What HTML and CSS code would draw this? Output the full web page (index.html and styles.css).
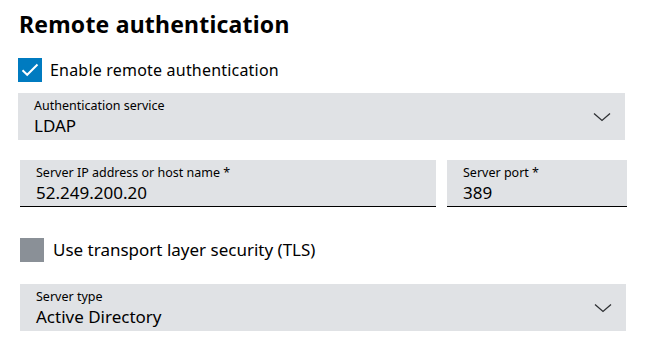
FILE: index.html
```html
<!DOCTYPE html>
<html lang="en">
<head>
    <meta charset="UTF-8">
    <meta name="viewport" content="width=device-width, initial-scale=1.0">
    <title>Remote authentication</title>
    <link rel="stylesheet" href="styles.css">
</head>
<body>
    <div class="page">
        <h1 class="title">Remote authentication</h1>

        <label class="check-row">
            <span class="checkbox checked">
                <svg width="24" height="24" viewBox="0 0 24 24">
                    <path d="M4.5 12.2 L9.2 16.8 L19.5 6.5" fill="none" stroke="#fff" stroke-width="2"/>
                </svg>
            </span>
            <span class="check-label">Enable remote authentication</span>
        </label>

        <div class="field select">
            <div class="field-text">
                <div class="field-label">Authentication service</div>
                <div class="field-value">LDAP</div>
            </div>
            <svg class="chevron" width="18" height="10" viewBox="0 0 18 10">
                <path d="M1 1.5 L9 8.5 L17 1.5" fill="none" stroke="#2e3033" stroke-width="1.3"/>
            </svg>
        </div>

        <div class="field-row shifted">
            <div class="field input host">
                <div class="field-text">
                    <div class="field-label">Server IP address or host name *</div>
                    <div class="field-value">52.249.200.20</div>
                </div>
            </div>
            <div class="field input port">
                <div class="field-text">
                    <div class="field-label">Server port *</div>
                    <div class="field-value">389</div>
                </div>
            </div>
        </div>

        <label class="check-row tls shifted">
            <span class="checkbox disabled"></span>
            <span class="check-label">Use transport layer security (TLS)</span>
        </label>

        <div class="field select server-type shifted">
            <div class="field-text">
                <div class="field-label">Server type</div>
                <div class="field-value">Active Directory</div>
            </div>
            <svg class="chevron" width="18" height="10" viewBox="0 0 18 10">
                <path d="M1 1.5 L9 8.5 L17 1.5" fill="none" stroke="#2e3033" stroke-width="1.3"/>
            </svg>
        </div>
    </div>
</body>
</html>
```

FILE: styles.css
```css
* {
    margin: 0;
    padding: 0;
    box-sizing: border-box;
    font-family: "Noto Sans", "Liberation Sans", Arial, sans-serif;
}

body {
    background: #fff;
    color: #000;
}

.page {
    width: 645px;
    padding: 9px 20px 0 18px;
}

.title {
    font-size: 23px;
    line-height: 32px;
    font-weight: 700;
    letter-spacing: 0.2px;
    margin: -1px 0 0 1px;
}

.check-row {
    display: flex;
    align-items: center;
    gap: 8px;
    margin-top: 18px;
    height: 24px;
}

.checkbox {
    width: 24px;
    height: 24px;
    flex-shrink: 0;
}

.checkbox svg {
    display: block;
}

.checked {
    background: #007bc0;
}

.disabled {
    background: #8a9097;
}

.check-label {
    font-size: 16px;
    line-height: 24px;
    letter-spacing: 0.2px;
}

.field {
    display: flex;
    align-items: center;
    height: 47px;
    background: #e0e2e5;
    padding: 0 14px 0 16px;
}

.field-text {
    flex: 1;
    align-self: flex-start;
    padding-top: 4px;
}

.field-label {
    font-size: 12.5px;
    line-height: 18px;
}

.field-value {
    font-size: 17px;
    line-height: 23px;
    margin-top: -1px;
}

.select {
    margin-top: 11px;
}

.chevron {
    display: block;
    flex-shrink: 0;
}

.shifted {
    margin-left: 2px;
}

.field-row {
    display: flex;
    gap: 11px;
    margin-top: 20px;
    margin-right: -2px;
}

.input {
    border-bottom: 1px solid #000;
}

.host {
    flex: 1;
}

.port {
    width: 180px;
}

.tls {
    margin-top: 31px;
    gap: 9px;
}

.tls .check-label {
    font-size: 17px;
    letter-spacing: 0;
}

.server-type {
    margin-top: 22px;
    margin-right: -1px;
}
```
